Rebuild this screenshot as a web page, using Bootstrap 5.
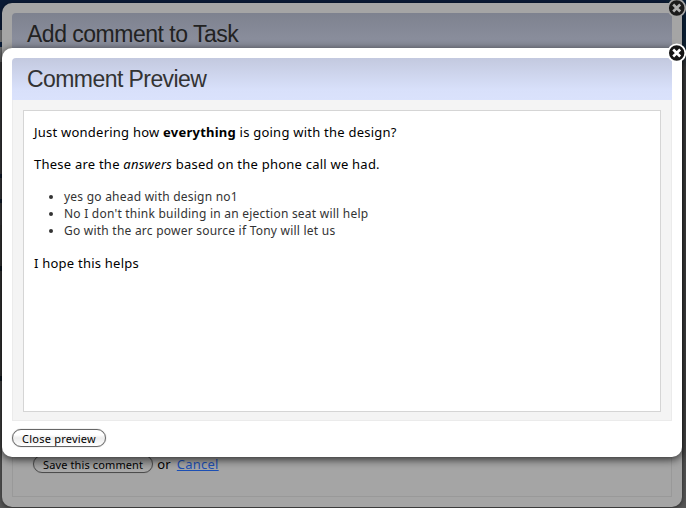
<!DOCTYPE html>
<html lang="en">
<head>
<meta charset="utf-8">
<meta name="viewport" content="width=device-width, initial-scale=1">
<title>Comment Preview</title>
<link href="https://cdn.jsdelivr.net/npm/bootstrap@5.3.0/dist/css/bootstrap.min.css" rel="stylesheet">
<style>
body{font-family:"Noto Sans","Open Sans",sans-serif;font-size:13px;color:#000;height:508px;letter-spacing:.23px}
.desk{height:508px;background:
  linear-gradient(#0b2140,#0b2140) 0 42px/2px 5px no-repeat,
  linear-gradient(#14233a,#14233a) 0 174px/2px 4px no-repeat,
  linear-gradient(#14233a,#14233a) 0 199px/2px 4px no-repeat,
  linear-gradient(#15202c,#15202c) 0 266px/2px 5px no-repeat,
  linear-gradient(#15202c,#15202c) 0 376px/2px 5px no-repeat,
  linear-gradient(#0b1b36 0 30px,#77787a 30px 62px,#4a4a4d 62px 225px,#444 225px 380px,#565656 380px)}
.desk-edge{width:20px;height:508px;background:linear-gradient(#0b1f35 0 35px,#142431 50px,#424344 68px,#484848 400px,#575757)}
.dialog-box{left:2px;width:680px;border-radius:10px;padding:10px}
.dialog-back{top:3px;height:504px;background:#a5a5a5;box-shadow:0 1px 5px rgba(0,0,0,.55)}
.dialog-front{top:48px;height:409px;background:#fff;box-shadow:0 2px 10px rgba(0,0,0,.8)}
.dialog-title{height:42px;padding:1px 0 0 15px;border-radius:4px 4px 0 0;font:23px/41px "Liberation Sans",Arial,sans-serif;letter-spacing:-.5px;color:#333}
.dialog-front .dialog-title{background:linear-gradient(#c3c9df,#d8e0fa 75%,#dae2fc);letter-spacing:-.57px}
.dialog-back .dialog-title{background:linear-gradient(#7e828f,#9094a3);color:#222}
.panel{border:1px solid #ebebeb;border-top:0;background:#f4f4f4;height:321px;padding:10px}
.panel-back{border:1px solid #999;border-top:0;height:442px;padding:0 20px 22px}
.preview{height:302px;border:1px solid #d5d5d5;background:#fff;padding:11px 10px}
.preview p{line-height:20px;margin-bottom:12px}
.preview ul{font-size:12px;line-height:17px;color:#333;padding-left:30px;margin:14px 0 14px}
.pill{height:18px;border:1px solid #666;border-radius:9px;padding:0 9px;font-size:11px;line-height:15px;letter-spacing:.23px;color:#000;box-shadow:0 0 1px #777}
.pill-light{background:linear-gradient(#fff 0 30%,#ececec 50%,#fff)}
.pill-dark{background:linear-gradient(#a8a8a8,#9c9c9c 50%,#aaa);border-color:#4c4c4c;letter-spacing:.12px}
.cancel{color:#1c4fb4;margin-left:6px}
.close-mark{width:20px;height:20px;right:-5px;top:-5px}
</style>
<script src="https://cdn.jsdelivr.net/npm/bootstrap@5.3.0/dist/js/bootstrap.bundle.min.js"></script>
</head>
<body class="overflow-hidden">
<div class="desk position-relative overflow-hidden">
  <div class="desk-edge ms-auto"></div>
  <section class="dialog-box dialog-back position-absolute">
    <h1 class="dialog-title m-0">Add comment to Task</h1>
    <div class="panel-back d-flex align-items-end">
      <div class="d-flex align-items-center">
        <button class="pill pill-dark">Save this comment</button>
        <span class="ms-1">or</span><a href="#" class="cancel">Cancel</a>
      </div>
    </div>
    <svg class="close-mark position-absolute" viewBox="0 0 20 20"><circle cx="9.7" cy="10" r="8.6" fill="#1b1b1b" stroke="#a5a5a5" stroke-width="1.6"/><path d="M6.2 6.5l7 7M13.2 6.5l-7 7" stroke="#b0b0b0" stroke-width="2.6"/></svg>
  </section>
  <section class="dialog-box dialog-front position-absolute">
    <h2 class="dialog-title m-0">Comment Preview</h2>
    <div class="panel">
      <div class="preview">
        <p>Just wondering how <strong>everything</strong> is going with the design?</p>
        <p>These are the <em>answers</em> based on the phone call we had.</p>
        <ul>
          <li>yes go ahead with design no1</li>
          <li>No I don't think building in an ejection seat will help</li>
          <li>Go with the arc power source if Tony will let us</li>
        </ul>
        <p>I hope this helps</p>
      </div>
    </div>
    <button class="pill pill-light d-block mt-2">Close preview</button>
    <svg class="close-mark position-absolute" viewBox="0 0 20 20"><circle cx="9.7" cy="10" r="8.6" fill="#151515" stroke="#fff" stroke-width="1.8"/><path d="M6.2 6.5l7 7M13.2 6.5l-7 7" stroke="#fff" stroke-width="2.6"/></svg>
  </section>
</div>
</body>
</html>
